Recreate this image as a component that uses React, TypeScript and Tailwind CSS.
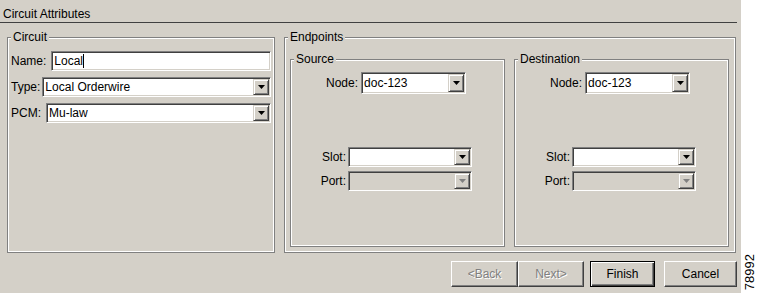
import React from 'react';

const sunken =
  'border border-t-[#808080] border-l-[#808080] border-b-white border-r-white shadow-[inset_1px_1px_0_#404040,inset_-1px_-1px_0_#d4d0c8]';

const Arrow = ({ disabled }: { disabled?: boolean }) => (
  <svg width="7" height="4" viewBox="0 0 7 4">
    <polygon points="0,0 7,0 3.5,4" fill={disabled ? '#808080' : '#000'} />
  </svg>
);

const Combo = ({ value, disabled, className = '' }: { value?: string; disabled?: boolean; className?: string }) => (
  <div className={`flex ${sunken} ${disabled ? 'bg-[#d4d0c8]' : 'bg-white'} ${className}`}>
    <div className="flex-1 pl-[2px] flex items-center whitespace-nowrap">{value}</div>
    <div className="w-[16px] my-px mr-px flex items-center justify-center bg-[#d4d0c8] border border-t-[#d4d0c8] border-l-[#d4d0c8] border-b-[#404040] border-r-[#404040] shadow-[inset_1px_1px_0_#fff,inset_-1px_-1px_0_#808080]">
      <Arrow disabled={disabled} />
    </div>
  </div>
);

const Group = ({ label, className = '', children }: { label: string; className?: string; children?: React.ReactNode }) => (
  <div className={`relative border border-[#808080] shadow-[inset_1px_1px_0_#fff,inset_-1px_-1px_0_#fff] ${className}`}>
    <span className="absolute -top-[8px] left-[3px] px-[2px] bg-[#d4d0c8] leading-[14px]">{label}</span>
    {children}
  </div>
);

const Endpoint = ({ label }: { label: string }) => (
  <Group label={label} className="w-[215px] h-[188px] flex flex-col">
    <div className="mt-[12px] h-[22px] pl-[35px] flex items-center">
      <span>Node:</span>
      <Combo value="doc-123" className="ml-[3px] w-[105px] h-full" />
    </div>
    <div className="mt-[53px] h-[20px] flex items-center">
      <span className="w-[55px] text-right">Slot:</span>
      <Combo className="ml-[2px] w-[124px] h-full" />
    </div>
    <div className="mt-[4px] h-[20px] flex items-center">
      <span className="w-[55px] text-right">Port:</span>
      <Combo disabled className="ml-[2px] w-[124px] h-full" />
    </div>
  </Group>
);

const Btn = ({ label, disabled, main, className = '' }: { label: string; disabled?: boolean; main?: boolean; className?: string }) => (
  <button
    className={`h-[26px] flex items-center justify-center bg-[#d4d0c8] ${
      main
        ? 'border border-black shadow-[inset_1px_1px_0_#fff,inset_-1px_-1px_0_#404040,inset_-2px_-2px_0_#808080]'
        : 'border border-t-white border-l-white border-b-[#404040] border-r-[#404040] shadow-[inset_-1px_-1px_0_#808080]'
    } ${disabled ? 'text-[#808080] [text-shadow:1px_1px_0_#fff]' : 'text-black'} ${className}`}
  >
    {label}
  </button>
);

export default function App() {
  return (
    <div className="w-[758px] h-[293px] flex bg-white font-['Liberation_Sans',Arial,sans-serif] text-[12px] leading-[14px] text-black">
      <div className="w-[741px] h-full bg-[#d4d0c8] flex flex-col">
        <div className="h-[22px] pl-[3px] pt-[7px]">Circuit Attributes</div>
        <div className="h-px w-[737px] bg-[#404040]" />

        <div className="flex mt-[14px] ml-[7px] gap-[9px]">
          <Group label="Circuit" className="w-[268px] h-[216px] pt-[13px] pl-[3px] pr-[3px] flex flex-col gap-[6px]">
            <div className="h-[20px] flex items-center">
              <span>Name:</span>
              <div className={`ml-[5px] flex-1 h-full bg-white flex items-center pl-[2px] ${sunken}`}>
                Local
                <span className="w-px h-[14px] bg-black" />
              </div>
            </div>
            <div className="h-[20px] flex items-center">
              <span>Type:</span>
              <Combo value="Local Orderwire" className="ml-[2px] flex-1 h-full" />
            </div>
            <div className="h-[20px] flex items-center">
              <span>PCM:</span>
              <Combo value="Mu-law" className="ml-[5px] flex-1 h-full" />
            </div>
          </Group>

          <Group label="Endpoints" className="w-[452px] h-[216px] pt-[21px] pl-[5px] pr-[6px] pb-[5px] flex gap-[9px]">
            <Endpoint label="Source" />
            <Endpoint label="Destination" />
          </Group>
        </div>

        <div className="flex justify-end pr-[4px] mt-[8px]">
          <Btn label="<Back" disabled className="w-[67px]" />
          <Btn label="Next>" disabled className="w-[66px]" />
          <Btn label="Finish" main className="w-[65px] ml-[6px]" />
          <Btn label="Cancel" className="w-[73px] ml-[9px]" />
        </div>
      </div>

      <div className="flex-1 flex flex-col justify-end items-center pb-[3px]">
        <span className="[writing-mode:vertical-rl] rotate-180 text-[13px] leading-[13px]">78992</span>
      </div>
    </div>
  );
}
